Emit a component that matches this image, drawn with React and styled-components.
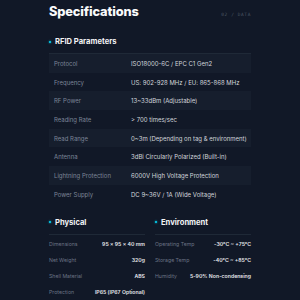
import React from "react";
import styled, { createGlobalStyle } from "styled-components";

const Global = createGlobalStyle`
  html, body {
    margin: 0;
    padding: 0;
    background: #111827;
  }
  body {
    font-family: Inter, "Noto Sans", sans-serif;
    -webkit-font-smoothing: antialiased;
  }
`;

const Page = styled.div`
  width: 300px;
  height: 300px;
  overflow: hidden;
  background: #111827;
  padding: 0 49px;
  box-sizing: border-box;
`;

const Header = styled.div`
  display: flex;
  justify-content: space-between;
  align-items: baseline;
  padding-top: 3px;
`;

const Title = styled.h1`
  margin: 0;
  font-size: 12.8px;
  font-weight: 800;
  color: #f9fafb;
  letter-spacing: -0.15px;
  line-height: 18px;
`;

const Tag = styled.span`
  font-size: 4.5px;
  color: #4b5563;
  letter-spacing: 0.6px;
  font-family: "DejaVu Sans Mono", monospace;
`;

const SectionHead = styled.div`
  display: flex;
  align-items: center;
  gap: 4px;
  margin-top: ${(p) => p.$top}px;
  height: 11px;
  font-size: 7.6px;
  font-weight: 700;
  color: #f3f4f6;
`;

const Dot = styled.span`
  width: 2px;
  height: 2px;
  background: #06b6d4;
  box-shadow: 0 0 2px #06b6d4;
`;

const Table = styled.div`
  margin-top: 6px;
  border-top: 1px solid #1f2937;
`;

const Row = styled.div`
  display: grid;
  grid-template-columns: 77px 1fr;
  align-items: center;
  height: 18.7px;
  padding-left: 5px;
  background: ${(p) => (p.$band ? "#161e2d" : "transparent")};
  font-size: 6px;
  white-space: nowrap;
`;

const Label = styled.span`
  color: #7c8597;
`;

const Value = styled.span`
  color: #d1d5db;
`;

const Columns = styled.div`
  display: grid;
  grid-template-columns: 1fr 1fr;
  column-gap: 10px;
`;

const List = styled.div`
  margin-top: 6px;
  border-top: 1px solid #1f2937;
  padding-top: 1px;
`;

const Item = styled.div`
  display: flex;
  justify-content: space-between;
  align-items: center;
  height: 16px;
  font-size: 5.2px;
  white-space: nowrap;
`;

const ItemLabel = styled.span`
  color: #6b7385;
`;

const ItemValue = styled.span`
  color: #e5e7eb;
  font-weight: 600;
`;

const rfid = [
  ["Protocol", "ISO18000-6C / EPC C1 Gen2"],
  ["Frequency", "US: 902-928 MHz / EU: 865-868 MHz"],
  ["RF Power", "13~33dBm (Adjustable)"],
  ["Reading Rate", "> 700 times/sec"],
  ["Read Range", "0~3m (Depending on tag & environment)"],
  ["Antenna", "3dBi Circularly Polarized (Built-in)"],
  ["Lightning Protection", "6000V High Voltage Protection"],
  ["Power Supply", "DC 9~36V / 1A (Wide Voltage)"],
];

const physical = [
  ["Dimensions", "95 x 95 x 40 mm"],
  ["Net Weight", "320g"],
  ["Shell Material", "ABS"],
  ["Protection", "IP65 (IP67 Optional)"],
];

const environment = [
  ["Operating Temp", "-30°C ~ +75°C"],
  ["Storage Temp", "-40°C ~ +85°C"],
  ["Humidity", "5-90% Non-condensing"],
];

const Block = ({ title, items }) => (
  <div>
    <SectionHead $top={13}>
      <Dot />
      {title}
    </SectionHead>
    <List>
      {items.map(([k, v]) => (
        <Item key={k}>
          <ItemLabel>{k}</ItemLabel>
          <ItemValue>{v}</ItemValue>
        </Item>
      ))}
    </List>
  </div>
);

export default function App() {
  return (
    <Page>
      <Global />
      <Header>
        <Title>Specifications</Title>
        <Tag>02 / DATA</Tag>
      </Header>
      <SectionHead $top={15}>
        <Dot />
        RFID Parameters
      </SectionHead>
      <Table>
        {rfid.map(([k, v], i) => (
          <Row key={k} $band={i % 2 === 0}>
            <Label>{k}</Label>
            <Value>{v}</Value>
          </Row>
        ))}
      </Table>
      <Columns>
        <Block title="Physical" items={physical} />
        <Block title="Environment" items={environment} />
      </Columns>
    </Page>
  );
}
